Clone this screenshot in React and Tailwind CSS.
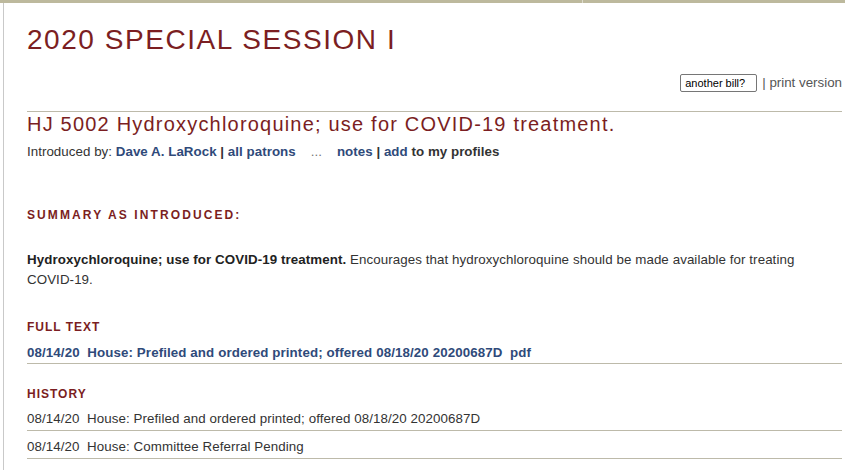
import React from "react";

const maroon = "text-[#7b1e22]";

const SectionTitle = ({ children, wide, className }) => (
  <h3
    className={`${maroon} font-bold text-[12px] leading-[16px] ${
      wide ? "tracking-[2.1px]" : "tracking-[1px]"
    } ${className}`}
  >
    {children}
  </h3>
);

const HistoryRow = ({ date, text, className }) => (
  <div
    className={`pb-[3px] border-b border-[#bdbaaa] text-[13.33px] leading-[16px] tracking-[0.08px] text-[#333] ${className}`}
  >
    {date}&nbsp;&nbsp;{text}
  </div>
);

const App = () => {
  return (
    <div
      className="w-[857px] h-[470px] bg-white overflow-hidden"
      style={{ fontFamily: '"Liberation Sans", Arial, sans-serif' }}
    >
      {/* top strip */}
      <div className="flex h-[3px] w-[845px]">
        <div className="w-[582px] bg-[#bdb99d]" />
        <div className="w-[1px] bg-[#dcdacb]" />
        <div className="flex-1 bg-[#bdb99d]" />
      </div>

      <div className="ml-[3px] w-[842px] h-[467px] border-l border-[#c9c9c9] pl-[23px]">
        <div className="w-[815px]">
          <h1 className={`${maroon} pt-[21px] text-[28px] leading-[32px] tracking-[1.55px]`}>
            2020 SPECIAL SESSION I
          </h1>

          <div className="mt-[18px] h-[18px] flex items-center justify-end gap-[5px] text-[13.33px] text-[#555]">
            <input
              defaultValue="another bill?"
              className="w-[77px] h-[18px] border border-[#767676] rounded-[2px] px-[4px] text-[11px] text-black outline-none"
            />
            <span>| print version</span>
          </div>

          <div className="mt-[19px] border-t border-[#bdbaaa]" />

          <h2 className={`${maroon} text-[20px] leading-[24px] tracking-[1.2px]`}>
            HJ 5002 Hydroxychloroquine; use for COVID-19 treatment.
          </h2>

          <div className="mt-2 text-[13.33px] leading-[16px] tracking-[0.04px] text-[#333]">
            Introduced by:{" "}
            <span className="font-bold text-[#2f4a7a]">Dave A. LaRock</span>
            <span className="font-bold"> | </span>
            <span className="font-bold text-[#2f4a7a]">all patrons</span>
            <span className="text-[#777]">&nbsp;&nbsp;&nbsp;&nbsp;...&nbsp;&nbsp;&nbsp;&nbsp;</span>
            <span className="font-bold text-[#2f4a7a]">notes</span>
            <span className="font-bold"> | </span>
            <span className="font-bold text-[#2f4a7a]">add</span>
            <span className="font-bold"> to my profiles</span>
          </div>

          <SectionTitle wide className="mt-[47px]">
            SUMMARY AS INTRODUCED:
          </SectionTitle>

          <p className="mt-[27px] text-[13.33px] leading-[20px] tracking-[0.08px] text-[#333] pr-[30px]">
            <b className="text-[#222]">Hydroxychloroquine; use for COVID-19 treatment.</b>{" "}
            Encourages that hydroxychloroquine should be made available for treating COVID-19.
          </p>

          <SectionTitle className="mt-[29px]">FULL TEXT</SectionTitle>

          <div className="mt-[10px] pb-[2px] border-b border-[#bdbaaa] text-[13.33px] leading-[16px] tracking-[0.1px] font-bold text-[#2f4a7a]">
            08/14/20&nbsp;&nbsp;House: Prefiled and ordered printed; offered 08/18/20 20200687D&nbsp;&nbsp;pdf
          </div>

          <SectionTitle className="mt-[22px]">HISTORY</SectionTitle>

          <HistoryRow
            className="pt-[9px]"
            date="08/14/20"
            text="House: Prefiled and ordered printed; offered 08/18/20 20200687D"
          />
          <HistoryRow
            className="pt-[8px]"
            date="08/14/20"
            text="House: Committee Referral Pending"
          />
        </div>
      </div>
    </div>
  );
};

export default App;
